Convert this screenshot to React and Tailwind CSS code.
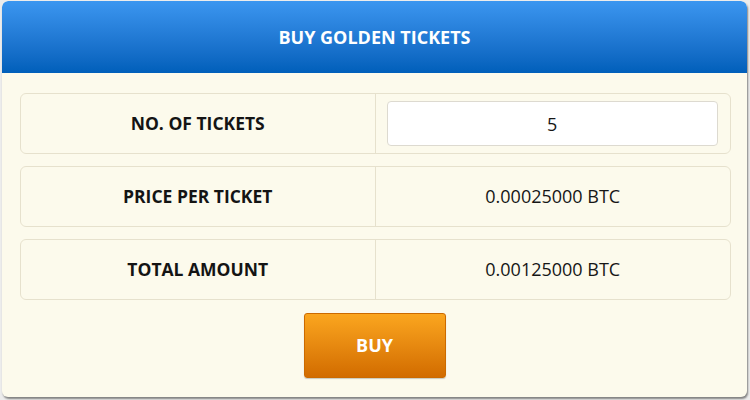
import { useState } from 'react';

function Row({ label, children }) {
  return (
    <div className="grid grid-cols-2 h-[61px] rounded-md border border-[#e6e1cd]">
      <div className="flex items-center justify-center border-r border-[#e6e1cd] text-[17.5px] font-bold text-[#141414]">
        {label}
      </div>
      <div className="flex items-center justify-center text-[18px] text-[#161616]">{children}</div>
    </div>
  );
}

export default function App() {
  const [tickets, setTickets] = useState('5');
  const price = 0.00025;
  const total = (Number(tickets) || 0) * price;

  return (
    <div className="w-[750px] h-[400px] bg-[#ececec] pt-px pl-[2px] font-['Open_Sans',sans-serif]">
      <div className="w-[745px] h-[396px] rounded-md bg-[#fcfaec] shadow-[1px_2px_2px_rgba(0,0,0,0.45)] overflow-hidden">
        {/* Cabecera */}
        <div className="h-[72px] flex items-center justify-center bg-gradient-to-b from-[#3b96f0] to-[#005fba] rounded-t-md">
          <h2 className="text-white font-bold text-[18px]">BUY GOLDEN TICKETS</h2>
        </div>

        <div className="pt-5 pl-[18px] pr-[16px] flex flex-col gap-[12px]">
          <Row label="NO. OF TICKETS">
            <div className="w-full h-full pt-[7px] pb-[7px] pl-[11px] pr-[12px]">
              <input
                type="text"
                value={tickets}
                onChange={(e) => setTickets(e.target.value)}
                className="w-full h-full bg-white border border-[#dddad0] rounded-[4px] text-center text-[18px] text-[#161616] outline-none"
              />
            </div>
          </Row>
          <Row label="PRICE PER TICKET">{price.toFixed(8)} BTC</Row>
          <Row label="TOTAL AMOUNT">{total.toFixed(8)} BTC</Row>
        </div>

        <div className="flex justify-center pt-[13px]">
          <button className="w-[142px] h-[65px] rounded-[3px] bg-gradient-to-b from-[#fba61e] to-[#d26c00] border border-[#cc6a00] text-white font-bold text-[18px] shadow-[0_1px_1px_rgba(0,0,0,0.2)]">
            BUY
          </button>
        </div>
      </div>
    </div>
  );
}
